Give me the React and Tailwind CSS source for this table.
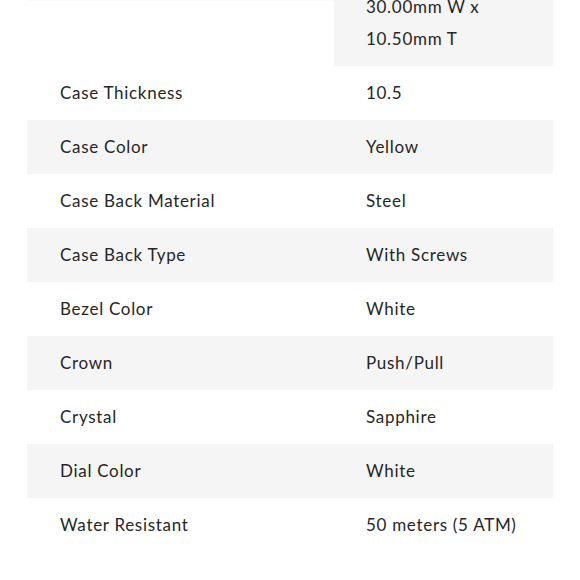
import React from "react";

const rows = [
  ["Case Thickness", "10.5"],
  ["Case Color", "Yellow"],
  ["Case Back Material", "Steel"],
  ["Case Back Type", "With Screws"],
  ["Bezel Color", "White"],
  ["Crown", "Push/Pull"],
  ["Crystal", "Sapphire"],
  ["Dial Color", "White"],
  ["Water Resistant", "50 meters (5 ATM)"],
];

export default function App() {
  return (
    <div className="w-[580px] h-[580px] overflow-hidden bg-white text-[#262626] text-[17px] tracking-[0.7px]" style={{ fontFamily: "Lato, 'Noto Sans', sans-serif" }}>
      <div className="mx-[27px] w-[526px] -mt-[52px]">
        <div className="grid grid-cols-[307px_219px]">
          <div className="bg-white border-t-[53px] border-[#fafafa]"></div>
          <div className="bg-[#f5f5f5] pl-[32px] pt-[11px] pb-[11px] leading-[32px]">
            <div>38.00mm L x</div>
            <div>30.00mm W x</div>
            <div>10.50mm T</div>
          </div>
        </div>
        {rows.map(([k, v], i) => (
          <div key={k} className={`grid grid-cols-[307px_219px] h-[54px] items-center ${i % 2 === 1 ? "bg-[#f5f5f5]" : "bg-white"}`}>
            <div className="pl-[33px]">{k}</div>
            <div className="pl-[32px]">{v}</div>
          </div>
        ))}
      </div>
    </div>
  );
}
